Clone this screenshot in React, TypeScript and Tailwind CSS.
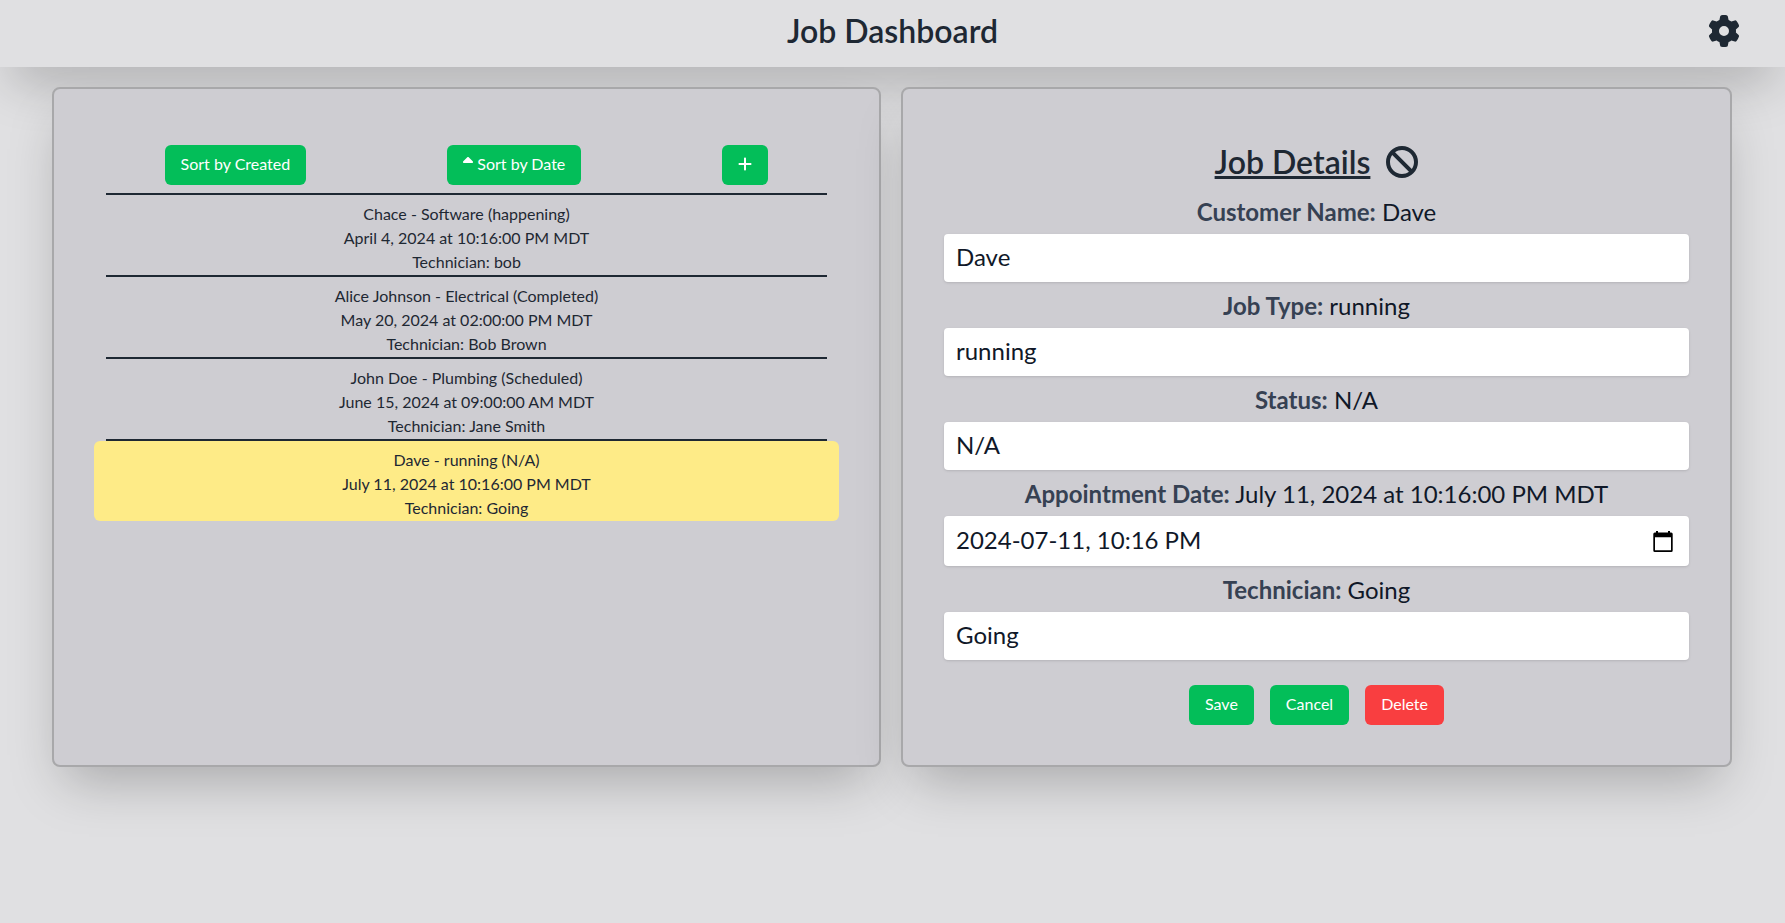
import { useState } from "react";
import { FaBan, FaGear, FaPlus, FaSortUp } from "react-icons/fa6";

type Job = {
  customer: string;
  type: string;
  status: string;
  date: string;
  technician: string;
};

const jobs: Job[] = [
  { customer: "Chace", type: "Software", status: "happening", date: "April 4, 2024 at 10:16:00 PM MDT", technician: "bob" },
  { customer: "Alice Johnson", type: "Electrical", status: "Completed", date: "May 20, 2024 at 02:00:00 PM MDT", technician: "Bob Brown" },
  { customer: "John Doe", type: "Plumbing", status: "Scheduled", date: "June 15, 2024 at 09:00:00 AM MDT", technician: "Jane Smith" },
  { customer: "Dave", type: "running", status: "N/A", date: "July 11, 2024 at 10:16:00 PM MDT", technician: "Going" },
];

const panel =
  "min-w-0 flex-1 rounded-lg border-2 border-[#a8a8aa] bg-[#cecdd2] pb-10 shadow-[0_25px_50px_-12px_rgba(0,0,0,0.25)]";
const button = "flex h-10 items-center rounded-md px-4 pb-0.5 text-base text-white";
const input =
  "block w-full rounded bg-white px-3 pb-1 text-2xl text-[#101828] shadow-sm outline-none";

function CalendarIcon() {
  return (
    <svg viewBox="0 0 20 21" className="h-[21px] w-5" fill="#000" aria-hidden="true">
      <path
        fillRule="evenodd"
        d="M3 0h2v1.6h10V0h2v1.6h1.2A1.5 1.5 0 0 1 19.700 3.100V19.500A1.500 1.500 0 0 1 18.200 21H1.800A1.500 1.500 0 0 1 .3 19.500V3.100A1.500 1.500 0 0 1 1.800 1.600H3zM2 6.300V19.200H18V6.300z"
      />
    </svg>
  );
}

function Field({ id, label, shown, value, calendar }: {
  id: string;
  label: string;
  shown: string;
  value: string;
  calendar?: boolean;
}) {
  const [text, setText] = useState(value);
  return (
    <div className="flex flex-col gap-1.5">
      <label htmlFor={id} className="text-center text-2xl text-[#101828]">
        <span className="font-bold text-[#364153]">{label}:</span> {shown}
      </label>
      <div className="relative">
        <input
          id={id}
          type="text"
          value={text}
          onChange={(e) => setText(e.target.value)}
          className={`${input} ${calendar ? "h-[50px]" : "h-12"}`}
        />
        {calendar && (
          <button type="button" aria-label="Pick a date" className="absolute inset-y-0 right-4 flex items-center">
            <CalendarIcon />
          </button>
        )}
      </div>
    </div>
  );
}

export default function App() {
  const [selected, setSelected] = useState(3);
  return (
    <div className="min-h-screen bg-[#e0e0e2] font-['Lato','Liberation_Sans',sans-serif] text-[#1e2833]">
      <header className="grid h-[67px] grid-cols-[1fr_auto_1fr] items-center px-[45px] pb-1.5 shadow-[0_25px_50px_-12px_rgba(0,0,0,0.25)]">
        <h1 className="col-start-2 text-[32px] leading-9 font-semibold">Job Dashboard</h1>
        <button type="button" aria-label="Settings" className="justify-self-end">
          <FaGear className="size-8" />
        </button>
      </header>

      <main className="flex gap-5 pt-5 pr-[53px] pb-10 pl-[52px]">
        <section className={`${panel} px-10 pt-14`}>
          <div className="flex justify-around pb-2">
            <button type="button" className={`${button} bg-[#03be59]`}>Sort by Created</button>
            <button type="button" className={`${button} gap-1 bg-[#03be59]`}>
              <FaSortUp className="h-4 w-2.5" />
              Sort by Date
            </button>
            <button type="button" aria-label="Add job" className={`${button} bg-[#03be59]`}>
              <FaPlus className="h-4 w-3.5" />
            </button>
          </div>
          <div className="mx-3 h-0.5 bg-[#1e2833]" />
          <ul>
            {jobs.map((job, i) => (
              <li key={job.customer}>
                <button
                  type="button"
                  onClick={() => setSelected(i)}
                  className={`block w-full rounded-md pt-[7px] pb-px text-center text-base ${i === selected ? "bg-[#feeb87]" : ""}`}
                >
                  <span className="block">{job.customer} - {job.type} ({job.status})</span>
                  <span className="block">{job.date}</span>
                  <span className="block">Technician: {job.technician}</span>
                </button>
                {i < jobs.length - 1 && <div className="mx-3 h-0.5 bg-[#1e2833]" />}
              </li>
            ))}
          </ul>
        </section>

        <section className={`${panel} px-[41px] pt-[55px]`}>
          <div className="flex items-center justify-center gap-4">
            <h2 className="text-[32px] leading-9 font-semibold underline decoration-3">Job Details</h2>
            <button type="button" aria-label="Stop editing">
              <FaBan className="size-8" />
            </button>
          </div>
          <form className="mt-4" onSubmit={(e) => e.preventDefault()}>
            <div className="flex flex-col gap-2">
              <Field id="customer" label="Customer Name" shown="Dave" value="Dave" />
              <Field id="type" label="Job Type" shown="running" value="running" />
              <Field id="status" label="Status" shown="N/A" value="N/A" />
              <Field
                id="date"
                label="Appointment Date"
                shown="July 11, 2024 at 10:16:00 PM MDT"
                value="2024-07-11, 10:16 PM"
                calendar
              />
              <Field id="technician" label="Technician" shown="Going" value="Going" />
            </div>
            <div className="mt-[25px] flex justify-center gap-4">
              <button type="submit" className={`${button} bg-[#03be59]`}>Save</button>
              <button type="button" className={`${button} bg-[#03be59]`}>Cancel</button>
              <button type="button" className={`${button} bg-[#f93e40]`}>Delete</button>
            </div>
          </form>
        </section>
      </main>
    </div>
  );
}
